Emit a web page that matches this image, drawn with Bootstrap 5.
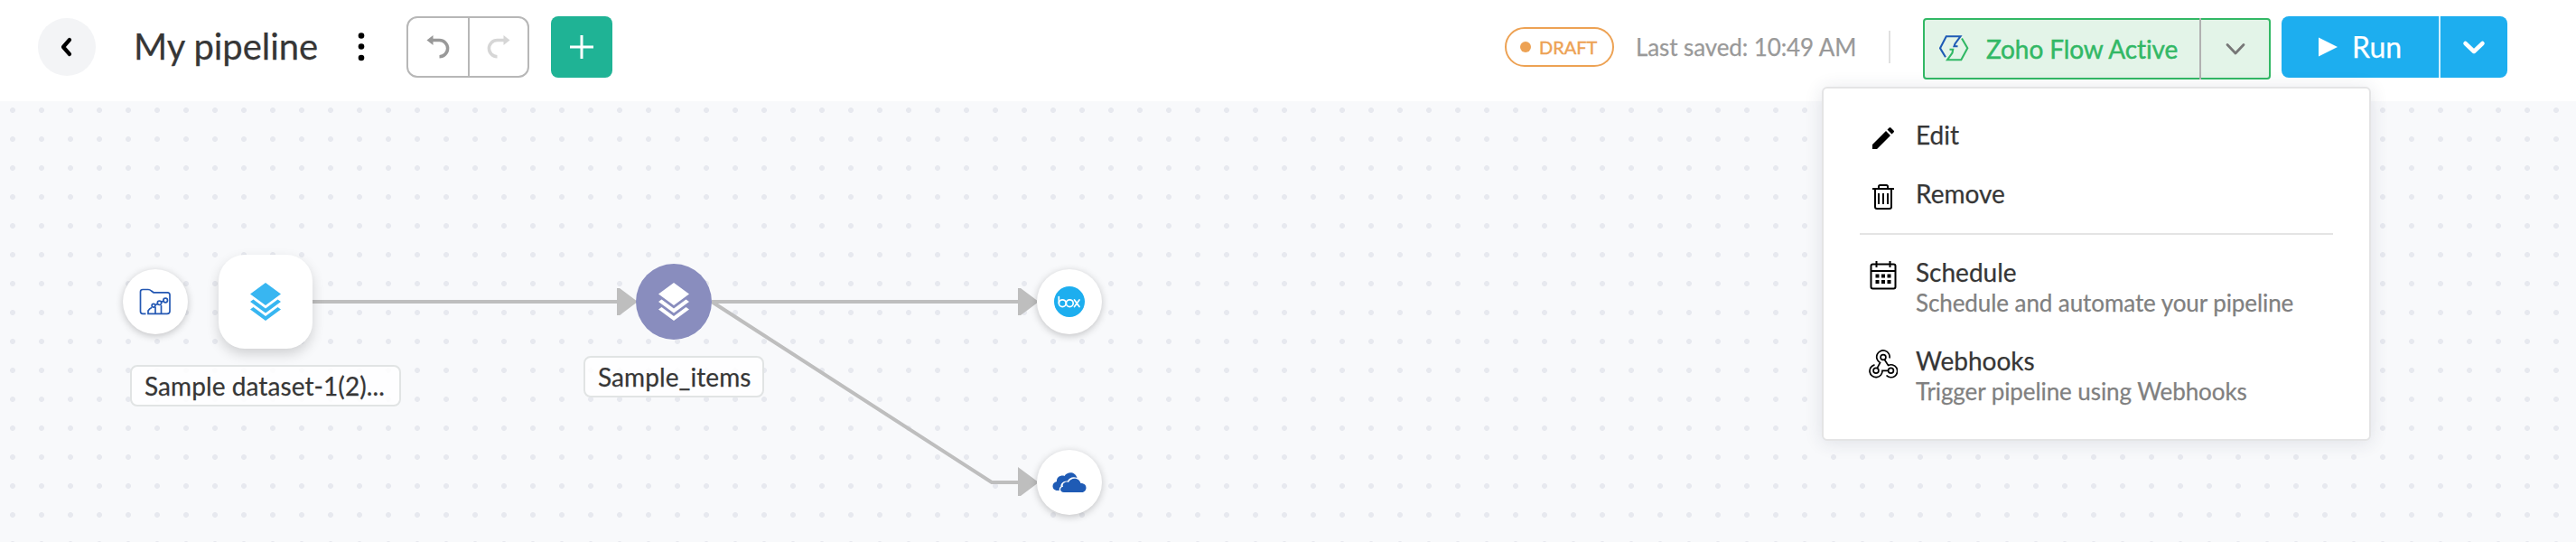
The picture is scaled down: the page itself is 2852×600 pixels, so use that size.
<!DOCTYPE html>
<html lang="en">
<head>
<meta charset="utf-8">
<title>My pipeline</title>
<link href="https://cdn.jsdelivr.net/npm/bootstrap@5.3.0/dist/css/bootstrap.min.css" rel="stylesheet">
<style>
body{font-family:Lato,sans-serif;color:#363636;height:600px;overflow:hidden;background:#f8f9fb;-webkit-text-stroke:.25px currentColor}
svg{display:block;flex:none}
.topbar{height:112px;padding:18px 76px 0 42px}
.back{width:64px;height:64px;background:#f3f4f6;margin-top:2px}
.title{font-size:40px;line-height:67px;margin:0 0 0 42px;width:203px;font-weight:400;white-space:nowrap;letter-spacing:-.05px}
.kebab{width:10px;margin-left:44px;margin-top:17px}
.history{width:136px;height:68px;border:2px solid #b7b7b7;border-radius:12px;margin-left:45px;background:#fff}
.history>*{width:50%;height:100%}
.history>*+*{border-left:2px solid #b7b7b7}
.add{width:68px;height:68px;background:#1fb395;border-radius:8px;margin-left:24px}
.pill{width:121px;height:44px;margin-top:12px;border:2px solid #eda254;color:#eda254;font-size:20px;line-height:40px;padding-left:15px;gap:9px;-webkit-text-stroke-width:.45px}
.pill i{width:12px;height:12px;border-radius:50%;background:#eda254}
.saved{font-size:26px;line-height:68px;color:#999;margin-left:24px;width:246px;white-space:nowrap;letter-spacing:-.1px}
.rule{width:2px;height:36px;background:#e0e0e0;margin:16px 36px 0 34px}
.flowbtn{width:385px;height:68px;margin-top:2px;border:2px solid #32b865;border-radius:4px;background:#e3f4e8;color:#32b865;font-size:28px;white-space:nowrap;letter-spacing:-.1px;-webkit-text-stroke-width:.45px}
.flowbtn .main{width:306px;padding-left:16px;gap:19px}
.flowbtn .drop{width:77px;border-left:2px solid #b1b1b1;margin:-2px 0}
.runbtn{width:250px;height:68px;margin-left:12px;border-radius:8px;background:#1daeef;color:#fff;font-size:32px}
.runbtn .main{width:174px;padding-left:41px;gap:15px}
.runbtn .drop{width:76px;border-left:2px solid #d2effc}
.board{height:488px;background:#f8f9fb radial-gradient(circle at 14px 10px,#e7e9ef 2.6px,transparent 3.3px) 0 0/32px 32px}
.wires{position:absolute;left:0;top:0}
.node{position:absolute;border-radius:50%;background:#fff;width:72px;height:72px;box-shadow:0 2px 8px rgba(0,0,0,.22)}
.node.tile{width:104px;height:104px;border-radius:29px;box-shadow:0 6px 14px rgba(0,0,0,.16)}
.node.join{width:84px;height:84px;background:#898dbe;box-shadow:none}
.tag{position:absolute;height:46px;border:2px solid #e1e4e4;border-radius:8px;background:rgba(255,255,255,.86);font-size:28px;line-height:42px;padding-left:14px;white-space:nowrap;letter-spacing:.08px}
.flowmenu{position:absolute;left:2017px;top:96px;width:608px;height:392px;background:#fff;border:2px solid #e4e4e5;border-radius:6px;box-shadow:0 2px 20px rgba(40,50,80,.12);padding:34px 40px 0}
.item{font-size:28px;line-height:34px;padding-left:8px}
.item .ico{width:36px;margin-right:18px;display:flex;justify-content:center}
.item .sub{font-size:26px;color:#808080;white-space:nowrap;letter-spacing:-.08px}
.flowmenu hr{margin:0;border:0;height:2px;background:#e4e4e4;opacity:1}
</style>
</head>
<body>
<header class="topbar d-flex align-items-start bg-white">
  <div class="back rounded-circle d-flex align-items-center justify-content-center"><svg width="20" height="24" viewBox="0 0 20 24" fill="none" stroke="#000" stroke-width="4.200" stroke-linecap="round" stroke-linejoin="round"><path d="M13 4 6 12 13 20"/></svg></div>
  <h1 class="title">My pipeline</h1>
  <svg class="kebab" width="10" height="34" viewBox="0 0 10 34"><circle cx="5" cy="4.500" r="3.300"/><circle cx="5" cy="16.500" r="3.300"/><circle cx="5" cy="29" r="3.300"/></svg>
  <div class="history d-flex">
    <div class="d-flex align-items-center justify-content-center"><svg width="28" height="28" viewBox="0 0 28 28"><path d="M7 6.500H15.500A9 9 0 0 1 15.500 24.700" fill="none" stroke="#999" stroke-width="3.500"/><path d="M1.500 6.500 8.500 1V12z" fill="#999"/></svg></div>
    <div class="d-flex align-items-center justify-content-center"><svg width="28" height="28" viewBox="0 0 28 28"><path d="M21 6.500H12.500A9 9 0 0 0 12.500 24.700" fill="none" stroke="#d6d6d6" stroke-width="3.500"/><path d="M26.500 6.500 19.500 1V12z" fill="#d6d6d6"/></svg></div>
  </div>
  <div class="add d-flex align-items-center justify-content-center"><svg width="26" height="26" viewBox="0 0 26 26" stroke="#fff" stroke-width="3"><path d="M13 0V26M0 13H26"/></svg></div>
  <div class="pill rounded-pill d-flex align-items-center ms-auto"><i></i>DRAFT</div>
  <div class="saved">Last saved: 10:49 AM</div>
  <div class="rule"></div>
  <div class="flowbtn d-flex">
    <div class="main d-flex align-items-center"><svg width="33" height="30" viewBox="0 0 33 30" fill="none" stroke-width="2.100"><path d="M7 24.300 1 14.300 7.800 1.300H23.500L17.500 9.500 16.500 12.300H20.500" stroke="#1f5bb5"/><path d="M25 3.500 31.300 14.300 24.300 27.200H9L14.500 19.500 15.200 15.700H11.500" stroke="#32b865"/></svg><span>Zoho Flow Active</span></div>
    <div class="drop d-flex align-items-center justify-content-center"><svg width="24" height="16" viewBox="0 0 24 16" fill="none" stroke="#777" stroke-width="2.800" stroke-linecap="round" stroke-linejoin="round"><path d="M3 3.500 12 13 21 3.500"/></svg></div>
  </div>
  <div class="runbtn d-flex">
    <div class="main d-flex align-items-center"><svg width="22" height="22" viewBox="0 0 22 22"><path d="M0 .500 21 11 0 21.500z" fill="#fff"/></svg><span>Run</span></div>
    <div class="drop d-flex align-items-center justify-content-center"><svg width="26" height="18" viewBox="0 0 26 18" fill="none" stroke="#fff" stroke-width="4.500" stroke-linecap="round" stroke-linejoin="round"><path d="M3.500 5 13 14 22.500 5"/></svg></div>
  </div>
</header>
<main class="board position-relative">
  <svg class="wires" width="1300" height="488" viewBox="0 112 1300 488"><g fill="none" stroke="#bebebe" stroke-width="4"><path d="M346 334H690M788 334H1132M788 334 1098 534H1132"/></g><path d="M683 319H686L706 334 686 349H683zM1127 319H1130L1150 334 1130 349H1127zM1127 517 1150 534 1130 549H1127z" fill="#bebebe"/></svg>

  <div class="node d-flex align-items-center justify-content-center" style="left:136px;top:186px"><svg width="36" height="30" viewBox="0 0 36 30" fill="none" stroke="#2458b3" stroke-width="1.700"><path d="M7.500 28.300H4Q1.500 28.300 1.500 25.800V4Q1.500 1.500 4 1.500H10Q12 1.500 13.500 3L16 4.800H31.500Q34 4.800 34 7.500V25.500Q34 28.300 31 28.300H10V25Q11.500 22.500 14 21.500M18 28V21M24.500 28V19M18 18.500 20.500 17.500M24.500 15.500 27 14"/><circle cx="16" cy="19.300" r="1.900"/><circle cx="22.500" cy="16.300" r="2.200"/><circle cx="29.200" cy="13.500" r="2.300"/></svg></div>
  <div class="node tile d-flex align-items-center justify-content-center" style="left:242px;top:170px"><svg width="34" height="42" viewBox="0 0 34 42" fill="#38b6f1"><path d="M17 0 34 12.500 17 25 0 12.500zM0 21 3.500 18.500 17 28.500 30.500 18.500 34 21 17 33.500zM0 29.500 3.500 27 17 37 30.500 27 34 29.500 17 42z"/></svg></div>
  <div class="tag" style="left:144px;top:292px;width:300px">Sample dataset-1(2)...</div>

  <div class="node join d-flex align-items-center justify-content-center" style="left:704px;top:180px"><svg width="34" height="42" viewBox="0 0 34 42" fill="#fff"><path d="M17 0 34 12.500 17 25 0 12.500zM0 21 3.500 18.500 17 28.500 30.500 18.500 34 21 17 33.500zM0 29.500 3.500 27 17 37 30.500 27 34 29.500 17 42z"/></svg></div>
  <div class="tag" style="left:646px;top:282px;width:200px">Sample_items</div>

  <div class="node d-flex align-items-center justify-content-center" style="left:1148px;top:186px"><svg width="34" height="34" viewBox="0 0 34 34"><circle cx="17" cy="17" r="17" fill="#1daeef"/><g fill="none" stroke="#fff" stroke-width="1.700" stroke-linecap="round"><path d="M5.300 11.500V18.500M22.500 15 28 22.500M28 15 22.500 22.500"/><circle cx="9.300" cy="18.700" r="3.900"/><circle cx="17.300" cy="18.700" r="3.900"/></g></svg></div>
  <div class="node d-flex align-items-center justify-content-center" style="left:1148px;top:386px"><svg width="38" height="24" viewBox="0 0 38 24" fill="#1f5bb5"><path d="M6 21C2 21 .5 18.500 .5 16S2.500 11.500 5 11C4.500 6 10 3.500 13.500 5 17-.5 25.500 0 27.500 7 23 5 18.500 7 17 10.500 12.500 10 9 13.500 9.500 16.500 7.500 18 7.500 20 8 21z"/><path d="M13 23C7.500 23 8.500 16.500 12 17 10.500 13 15 10.500 18 12 20 6.500 29.500 5.500 31.500 13 36 13 37.500 15.500 37.500 18S35.500 23 33 23z"/></svg></div>
</main>

<div class="flowmenu">
  <div class="item d-flex" style="height:65px"><span class="ico"><svg width="24" height="24" viewBox="0 0 24 24" style="margin-top:9px"><path d="M0 24V19L15 4 20 9 5 24zM16.500 2.500 18.500.5Q19.500-.5 20.500.5L23.500 3.500Q24.500 4.500 23.500 5.500L21.500 7.500z"/></svg></span>Edit</div>
  <div class="item d-flex" style="height:61px"><span class="ico"><svg width="24" height="28" viewBox="0 0 24 28" fill="none" stroke="#000" stroke-width="2" style="margin-top:7px"><path d="M0 5H24M7 5V2.500Q7 1 8.500 1H15.500Q17 1 17 2.500V5M3 5V25Q3 27 5 27H19Q21 27 21 25V5M7 10V22M12 10V22M17 10V22"/></svg></span>Remove</div>
  <hr>
  <div class="item d-flex" style="height:98px;margin-top:24px"><span class="ico"><svg width="30" height="32" viewBox="0 0 30 32" style="margin-top:5px"><path d="M1.500 11H28.500M7.500 0V7M22.500 0V7M3.500 3.500H26.500Q28.500 3.500 28.500 5.500V28.500Q28.500 30.500 26.500 30.500H3.500Q1.500 30.500 1.500 28.500V5.500Q1.500 3.500 3.500 3.500z" fill="none" stroke="#000" stroke-width="2"/><path d="M6.500 14.500h4v4h-4zM13 14.500h4v4h-4zM19.500 14.500h4v4h-4zM6.500 21h4v4h-4zM13 21h4v4h-4zM19.500 21h4v4h-4z"/></svg></span><div><div>Schedule</div><div class="sub">Schedule and automate your pipeline</div></div></div>
  <div class="item d-flex"><span class="ico"><svg width="32" height="32" viewBox="0 0 32 32" fill="none" stroke="#000" stroke-width="1.700" style="margin-top:5px"><circle cx="16" cy="8.500" r="2.900"/><circle cx="8" cy="23.300" r="2.900"/><circle cx="24.500" cy="23.300" r="2.900"/><path d="M9.300 20.700 12.500 14.500A7.200 7.200 0 1 1 23 9.500M17.500 11.200 21.500 17.500A7 7 0 1 1 19.500 28.500M21.500 23.300H15A7 7 0 1 1 6.500 16.800"/></svg></span><div><div>Webhooks</div><div class="sub">Trigger pipeline using Webhooks</div></div></div>
</div>
<script src="https://cdn.jsdelivr.net/npm/bootstrap@5.3.0/dist/js/bootstrap.bundle.min.js"></script>
</body>
</html>
